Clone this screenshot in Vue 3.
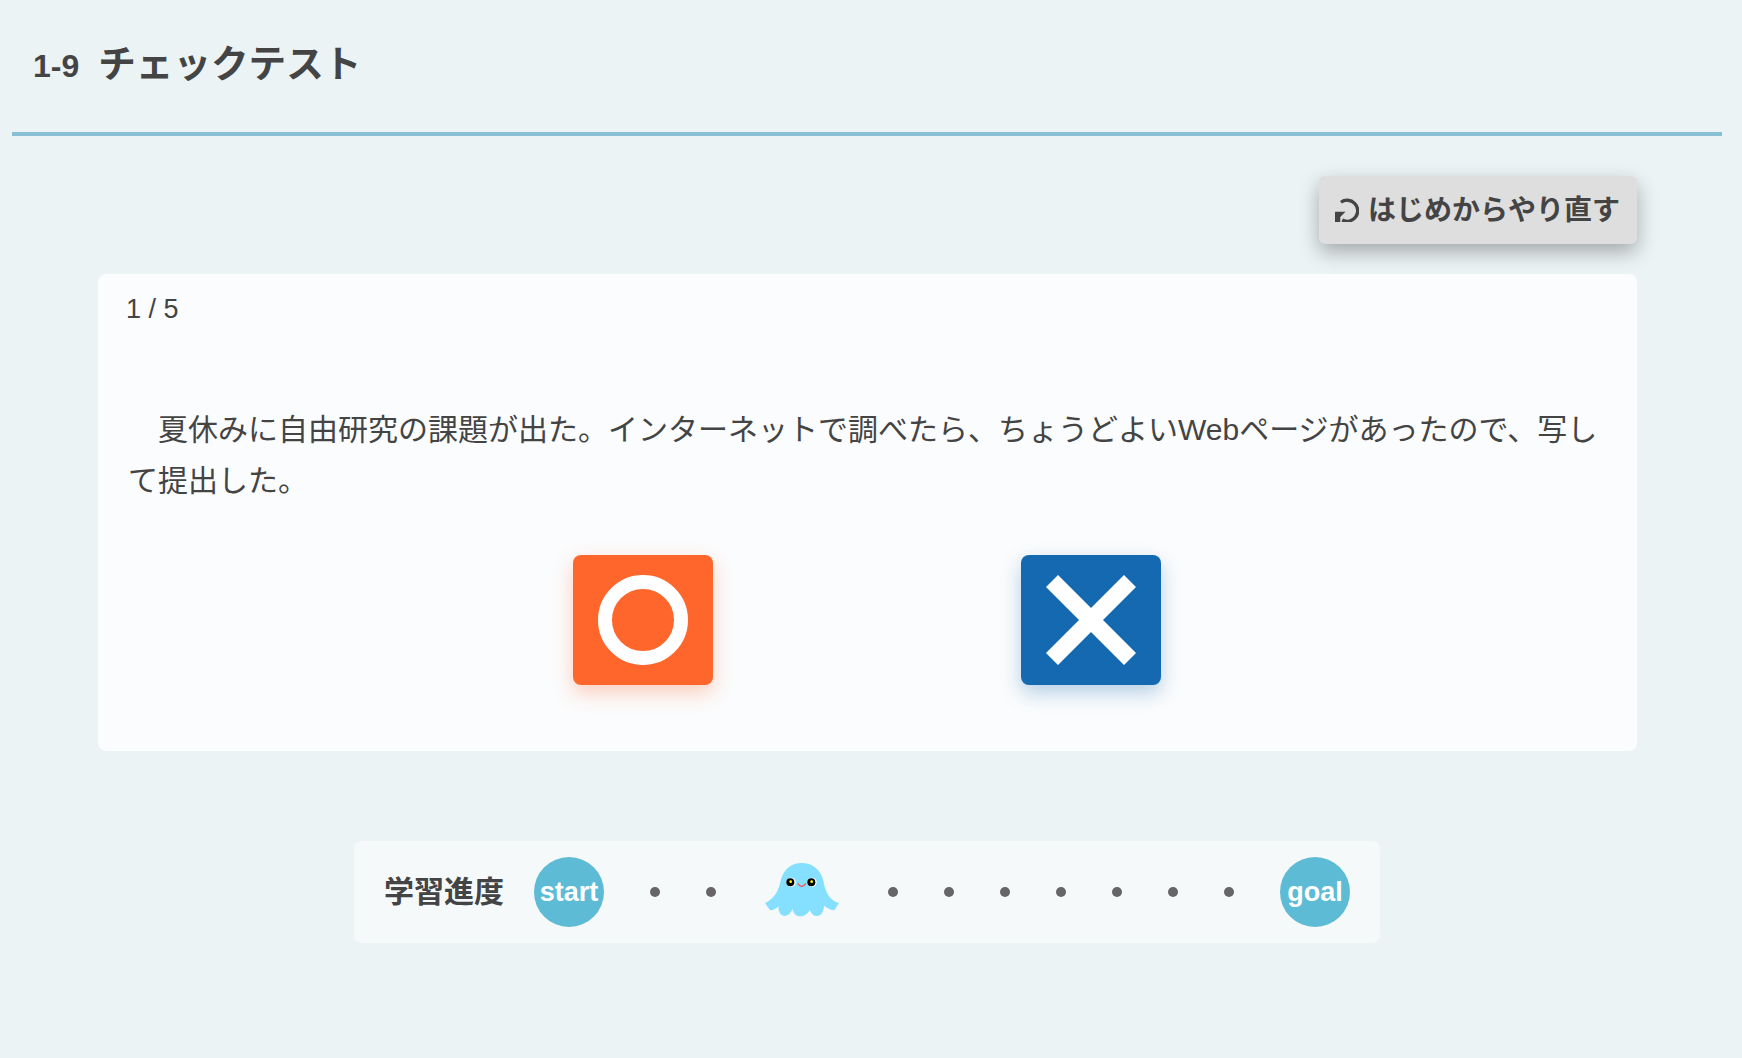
<template>
  <div class="check-test">
    <header class="page-title">
      <span class="section-no">1-9</span>
      <h1>チェックテスト</h1>
    </header>

    <div class="toolbar">
      <button type="button" class="restart-button">
        <svg class="restart-icon" viewBox="30 17 73 73" aria-hidden="true">
          <path d="M48 30 A32 32 0 1 1 52 84" fill="none" stroke="#444" stroke-width="10" />
          <path d="M30 59 H62 L46 75 V90 H30 Z" fill="#444" />
        </svg>
        <span class="restart-label">はじめからやり直す</span>
      </button>
    </div>

    <section class="question-card">
      <p class="question-count">{{ current }} / {{ total }}</p>
      <p class="question-text">夏休みに自由研究の課題が出た。インターネットで調べたら、ちょうどよいWebページがあったので、写して提出した。</p>
      <div class="answers">
        <button type="button" class="answer answer-yes" aria-label="まる">
          <svg viewBox="0 0 90 90" width="90" height="90" aria-hidden="true">
            <circle cx="45" cy="45" r="38" fill="none" stroke="#fff" stroke-width="14" />
          </svg>
        </button>
        <button type="button" class="answer answer-no" aria-label="ばつ">
          <svg viewBox="0 0 90 90" width="90" height="90" aria-hidden="true">
            <polygon fill="#fff" points="12,0 45,33 78,0 90,12 57,45 90,78 78,90 45,57 12,90 0,78 33,45 0,12" />
          </svg>
        </button>
      </div>
    </section>

    <div class="progress">
      <span class="progress-label">学習進度</span>
      <span class="endpoint">start</span>
      <template v-for="step in steps" :key="step">
        <svg v-if="step === current + 2" class="octopus" viewBox="36 9 240 240" aria-hidden="true">
          <path fill="#85e0ff" d="M45 162 C70 150 85 130 92 95 C100 60 125 42 155 42 C185 42 212 60 220 95 C226 130 240 155 267 162 L253 184 C240 182 228 175 222 170 C222 190 210 205 195 200 C188 198 182 190 180 182 C172 198 158 202 150 202 C142 202 132 198 127 180 C122 195 112 202 100 200 C90 198 84 185 86 172 C80 178 70 184 60 184 Z" />
          <circle cx="123" cy="100" r="14" fill="#fff" />
          <circle cx="186" cy="100" r="14" fill="#fff" />
          <circle cx="121" cy="100" r="12" fill="#000" />
          <circle cx="184" cy="100" r="12" fill="#000" />
          <circle cx="122" cy="98" r="4" fill="#ff0" />
          <circle cx="185" cy="98" r="4" fill="#ff0" />
          <path d="M143 103 Q155 122 167 103" fill="none" stroke="#f0565a" stroke-width="4" />
        </svg>
        <i v-else class="dot"></i>
      </template>
      <span class="endpoint">goal</span>
    </div>
  </div>
</template>

<script setup>
const current = 1
const total = 5
const steps = [1, 2, 3, 4, 5, 6, 7, 8, 9, 10]
</script>

<style>
body {
  background: #ebf3f5;
}
</style>

<style scoped>
.check-test {
  padding: 0 20px 100px 12px;
  color: #444;
  font-family: "Liberation Sans", "Noto Sans CJK JP", sans-serif;
}

.page-title {
  display: flex;
  align-items: center;
  gap: 19px;
  height: 132px;
  padding-left: 21px;
  border-bottom: 4px solid #88c0d6;
}

.section-no {
  font-size: 32px;
  font-weight: 700;
}

.page-title h1 {
  margin: 0 0 11px;
  font-size: 37.6px;
  font-weight: 700;
}

.toolbar {
  display: flex;
  justify-content: flex-end;
  margin: 40px 85px 30px 0;
}

.restart-button {
  display: flex;
  align-items: center;
  gap: 9px;
  height: 68px;
  padding: 0 17px 0 16px;
  border: none;
  border-radius: 6px;
  background: #dedede;
  color: #444;
  font-family: inherit;
  font-size: 28px;
  font-weight: 700;
  box-shadow: 0 8px 20px rgba(0, 0, 0, 0.3);
}

.restart-label {
  margin-bottom: 4px;
}

.restart-icon {
  width: 24px;
  height: 24px;
}

.question-card {
  margin: 0 85px 0 86px;
  padding: 21px 28px 66px;
  border-radius: 8px;
  background: #fbfcfd;
}

.question-count {
  margin: 0;
  font-size: 27px;
  line-height: 28px;
}

.question-text {
  margin: 81px 0 0;
  padding: 0 2px;
  font-size: 30px;
  line-height: 51px;
  text-indent: 1em;
}

.answers {
  display: flex;
  justify-content: center;
  gap: 308px;
  margin-top: 49px;
  padding-right: 2px;
}

.answer {
  display: flex;
  align-items: center;
  justify-content: center;
  width: 140px;
  height: 130px;
  padding: 0;
  border: none;
  border-radius: 8px;
}

.answer-yes {
  background: #ff662b;
  box-shadow: 0 8px 20px rgba(255, 102, 43, 0.3);
}

.answer-no {
  background: #1569b0;
  box-shadow: 0 8px 20px rgba(21, 105, 176, 0.3);
}

.progress {
  display: flex;
  align-items: center;
  gap: 46px;
  width: 1026px;
  height: 102px;
  box-sizing: border-box;
  margin: 90px auto 0 342px;
  padding: 0 30px;
  border-radius: 8px;
  background: #f5f9fa;
}

.progress-label {
  margin-right: -16px;
  margin-bottom: 6px;
  font-size: 30px;
  font-weight: 700;
  white-space: nowrap;
}

.endpoint {
  display: flex;
  flex: none;
  align-items: center;
  justify-content: center;
  width: 70px;
  height: 70px;
  border-radius: 50%;
  background: #5ebbd6;
  color: #fff;
  font-size: 27px;
  font-weight: 700;
}

.dot {
  flex: none;
  width: 10px;
  height: 10px;
  border-radius: 50%;
  background: #666;
}

.octopus {
  flex: none;
  width: 80px;
  height: 80px;
}
</style>
